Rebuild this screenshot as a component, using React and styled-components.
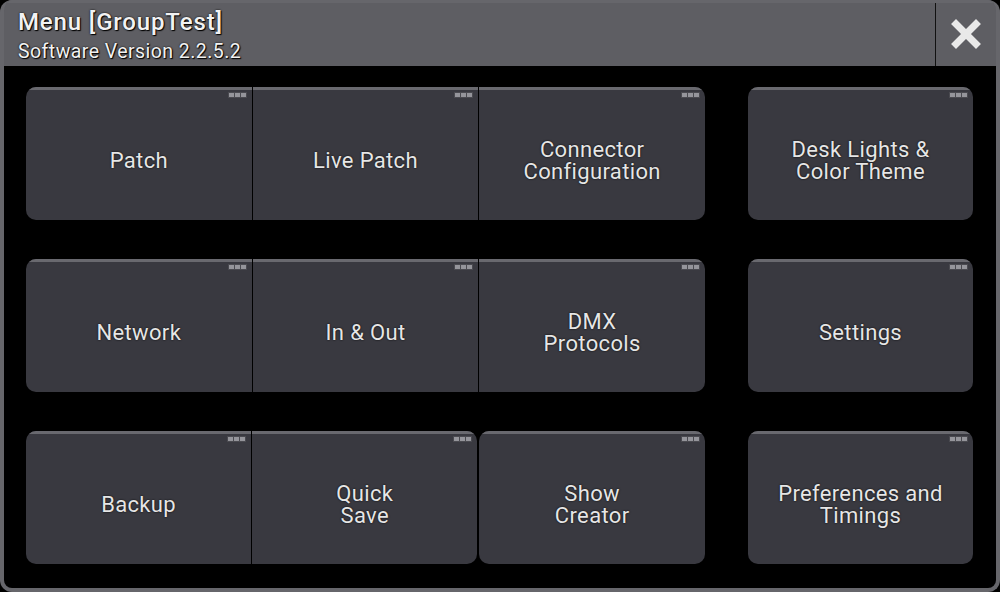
import React from 'react';
import styled, { createGlobalStyle } from 'styled-components';

const GlobalStyle = createGlobalStyle`
  html, body {
    margin: 0;
    padding: 0;
    background: #000;
  }
  * {
    box-sizing: border-box;
  }
`;

const Window = styled.div`
  width: 1000px;
  height: 592px;
  display: flex;
  flex-direction: column;
  background: #5e5e63;
  border: 4px solid #66666b;
  border-top: none;
  border-radius: 12px;
  overflow: hidden;
  font-family: Roboto, "Liberation Sans", sans-serif;
`;

const TitleBar = styled.header`
  height: 66px;
  display: flex;
  align-items: stretch;
  background: #5e5e63;
  border-top: 3px solid #66666b;
  flex-shrink: 0;
`;

const TitleText = styled.div`
  flex: 1;
  display: flex;
  flex-direction: column;
  padding: 5px 0 0 14px;
  color: #f2f2f2;
  text-shadow: 0 0 2px #000, 1px 1px 1px #000;

  h1 {
    margin: 0;
    font-size: 24px;
    font-weight: 500;
    line-height: 28px;
    letter-spacing: 0.85px;
  }

  span {
    margin-top: 5px;
    font-size: 19.5px;
    line-height: 22px;
    letter-spacing: 0.45px;
  }
`;

const CloseButton = styled.button`
  width: 61px;
  border: none;
  border-left: 1px solid #111;
  background: #5e5e63;
  display: flex;
  align-items: center;
  justify-content: center;
  padding: 0 0 2px;
  cursor: pointer;
`;

const Body = styled.main`
  flex: 1;
  background: #000;
  padding: 21px 23px 24px 22px;
  display: flex;
  gap: 43px;
`;

const LeftArea = styled.div`
  width: 679px;
  display: flex;
  flex-direction: column;
  gap: 39px;
`;

const RightColumn = styled.div`
  flex: 1;
  display: flex;
  flex-direction: column;
  gap: 39px;
`;

const Row = styled.div`
  height: 133px;
  display: flex;
  gap: 2px;
`;

const Group = styled.div`
  flex: ${p => p.$span};
  display: flex;
  gap: 1px;
  border-radius: 10px;
  overflow: hidden;
  background: #000;
`;

const Tile = styled.button`
  position: relative;
  flex: 1;
  border: none;
  border-top: 3px solid #69696f;
  background: #393940;
  color: #e6e6e6;
  font-family: Roboto, "Liberation Sans", sans-serif;
  font-size: 22px;
  line-height: 22px;
  letter-spacing: 0.35px;
  text-shadow: 0 0 2px #000;
  padding: 12px 4px 0;
  display: flex;
  align-items: center;
  justify-content: center;
  text-align: center;
  cursor: pointer;
  white-space: pre-line;
`;

const Dots = styled.span`
  position: absolute;
  top: 2px;
  right: 5px;
  display: flex;
  gap: 1px;
  padding: 1px;
  background: #4a4a50;

  i {
    width: 5px;
    height: 4px;
    background: #95959b;
  }
`;

const CloseIcon = () => (
  <svg width="32" height="32" viewBox="0 0 32 32">
    <g stroke="#e9e9e9" strokeWidth="7" strokeLinecap="square">
      <line x1="6" y1="6" x2="26" y2="26" />
      <line x1="26" y1="6" x2="6" y2="26" />
    </g>
  </svg>
);

const MenuTile = ({ label }) => (
  <Tile>
    <Dots><i /><i /><i /></Dots>
    {label}
  </Tile>
);

const leftRows = [
  [[3, ['Patch', 'Live Patch', 'Connector\nConfiguration']]],
  [[3, ['Network', 'In & Out', 'DMX\nProtocols']]],
  [[2, ['Backup', 'Quick\nSave']], [1, ['Show\nCreator']]],
];

const rightTiles = ['Desk Lights &\nColor Theme', 'Settings', 'Preferences and\nTimings'];

const App = () => (
  <>
    <GlobalStyle />
    <Window>
      <TitleBar>
        <TitleText>
          <h1>Menu [GroupTest]</h1>
          <span>Software Version 2.2.5.2</span>
        </TitleText>
        <CloseButton aria-label="Close">
          <CloseIcon />
        </CloseButton>
      </TitleBar>
      <Body>
        <LeftArea>
          {leftRows.map((groups, i) => (
            <Row key={i}>
              {groups.map(([span, labels], j) => (
                <Group key={j} $span={span}>
                  {labels.map(label => <MenuTile key={label} label={label} />)}
                </Group>
              ))}
            </Row>
          ))}
        </LeftArea>
        <RightColumn>
          {rightTiles.map(label => (
            <Row key={label}>
              <Group $span={1}>
                <MenuTile label={label} />
              </Group>
            </Row>
          ))}
        </RightColumn>
      </Body>
    </Window>
  </>
);

export default App;
